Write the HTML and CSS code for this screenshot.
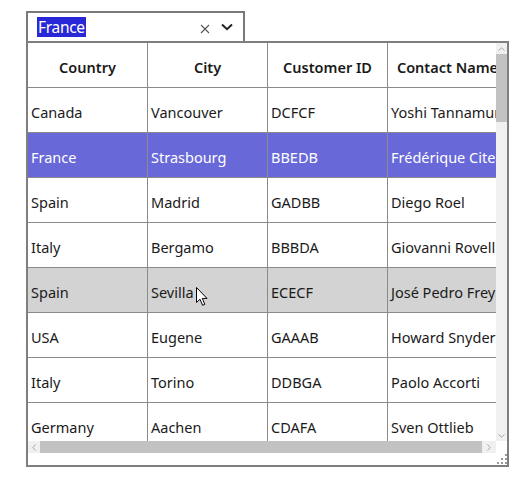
FILE: index.html
```html
<!DOCTYPE html>
<html>
<head>
<meta charset="utf-8">
<link rel="stylesheet" href="styles.css">
</head>
<body>
<div class="page">
  <div class="combo">
    <div class="combo-text"><span class="sel">France</span></div>
    <svg class="clear" width="10" height="10" viewBox="0 0 10 10"><path d="M1 1 L9 9 M9 1 L1 9" stroke="#555" stroke-width="1.1" fill="none"/></svg>
    <svg class="chev" width="12" height="8" viewBox="0 0 12 8"><path d="M1 1.5 L6 6.2 L11 1.5" stroke="#222" stroke-width="2" fill="none"/></svg>
  </div>
  <div class="popup">
    <div class="viewport">
      <div class="grid">
        <div class="row header"><div class="cell">Country</div><div class="cell">City</div><div class="cell">Customer ID</div><div class="cell">Contact Name</div></div>
        <div class="row"><div class="cell">Canada</div><div class="cell">Vancouver</div><div class="cell">DCFCF</div><div class="cell">Yoshi Tannamuri</div></div>
        <div class="row selected"><div class="cell">France</div><div class="cell">Strasbourg</div><div class="cell">BBEDB</div><div class="cell">Frédérique Citeaux</div></div>
        <div class="row"><div class="cell">Spain</div><div class="cell">Madrid</div><div class="cell">GADBB</div><div class="cell">Diego Roel</div></div>
        <div class="row"><div class="cell">Italy</div><div class="cell">Bergamo</div><div class="cell">BBBDA</div><div class="cell">Giovanni Rovelli</div></div>
        <div class="row hover"><div class="cell">Spain</div><div class="cell">Sevilla</div><div class="cell">ECECF</div><div class="cell">José Pedro Freyre</div></div>
        <div class="row"><div class="cell">USA</div><div class="cell">Eugene</div><div class="cell">GAAAB</div><div class="cell">Howard Snyder</div></div>
        <div class="row"><div class="cell">Italy</div><div class="cell">Torino</div><div class="cell">DDBGA</div><div class="cell">Paolo Accorti</div></div>
        <div class="row"><div class="cell">Germany</div><div class="cell">Aachen</div><div class="cell">CDAFA</div><div class="cell">Sven Ottlieb</div></div>
      </div>
      <div class="vscroll">
        <div class="arrow"><svg width="7" height="4" viewBox="0 0 7 4"><path d="M0.5 3.5 L3.5 0.8 L6.5 3.5" stroke="#a6a6a6" stroke-width="1" fill="none"/></svg></div>
        <div class="vthumb"></div>
        <div class="vtrack"></div>
        <div class="arrow"><svg width="7" height="4" viewBox="0 0 7 4"><path d="M0.5 0.5 L3.5 3.2 L6.5 0.5" stroke="#a6a6a6" stroke-width="1" fill="none"/></svg></div>
      </div>
    </div>
    <div class="hbar">
      <div class="hscroll">
        <div class="harrow"><svg width="4" height="7" viewBox="0 0 4 7"><path d="M3.5 0.5 L0.8 3.5 L3.5 6.5" stroke="#a6a6a6" stroke-width="1" fill="none"/></svg></div>
        <div class="hthumb"></div>
        <div class="harrow right"><svg width="4" height="7" viewBox="0 0 4 7"><path d="M0.5 0.5 L3.2 3.5 L0.5 6.5" stroke="#a6a6a6" stroke-width="1" fill="none"/></svg></div>
      </div>
      <div class="corner"></div>
    </div>
    <div class="footer">
      <svg class="grip" width="11" height="11" viewBox="0 0 11 11" fill="#9a9a9a">
        <rect x="8" y="0" width="2" height="2"/>
        <rect x="4" y="4" width="2" height="2"/><rect x="8" y="4" width="2" height="2"/>
        <rect x="0" y="8" width="2" height="2"/><rect x="4" y="8" width="2" height="2"/><rect x="8" y="8" width="2" height="2"/>
      </svg>
    </div>
  </div>
  <svg class="cursor" width="13" height="20" viewBox="0 0 13 20"><path d="M0.5 0.5 L0.5 15.5 L4 12.2 L6.6 18.3 L8.8 17.3 L6.3 11.4 L11 11.4 Z" fill="#fff" stroke="#000" stroke-width="1"/></svg>
</div>
</body>
</html>
```

FILE: styles.css
```css
* { box-sizing: border-box; }
html, body { margin: 0; padding: 0; background: #fff; }
body { font-family: "Noto Sans", "Open Sans", sans-serif; font-size: 14px; color: #1a1a1a; }
.page { position: relative; width: 529px; height: 482px; padding: 11px 0 0 26px; }

.combo {
  width: 219px; height: 30px;
  border: 2px solid #7a7a7a; border-bottom: none;
  display: flex; align-items: center;
  padding-left: 9px;
}
.combo-text { flex: 1; display: flex; margin-top: -1px; }
.sel { background: #2828d6; color: #fff; font-size: 15.5px; line-height: 20px; height: 20px; padding: 0 1px; display: inline-flex; align-items: center; letter-spacing: -0.3px; }
.clear { margin-right: 11px; margin-top: 4px; }
.chev { margin-right: 10px; margin-top: 0; }

.popup {
  width: 483px; height: 426px;
  border: 2px solid #7f7f7f;
  display: flex; flex-direction: column;
  background: #fff;
}
.viewport { display: flex; height: 398px; overflow: hidden; }
.grid { width: 468px; overflow: hidden; flex: none; }
.row { display: grid; grid-template-columns: 120px 120px 120px 120px; height: 45px; border-bottom: 1px solid #8a8a8a; width: 480px; }
.cell { border-right: 1px solid #8a8a8a; display: flex; align-items: center; padding: 4px 0 0 3px; white-space: nowrap; overflow: hidden; font-size: 14.5px; }
.header .cell { justify-content: center; font-weight: 600; padding-left: 0; }
.selected { background: #6868d9; }
.selected .cell { color: #fff; }
.hover { background: #d3d3d3; }

.vscroll { width: 11px; flex: none; background: #f0f0f0; display: flex; flex-direction: column; }
.arrow { height: 11px; display: flex; align-items: center; justify-content: center; }
.vthumb { height: 68px; background: #c2c2c2; }
.vtrack { flex: 1; }

.hbar { display: flex; height: 12px; }
.hscroll { width: 468px; background: #f0f0f0; display: flex; align-items: stretch; }
.harrow { width: 12px; display: flex; align-items: center; justify-content: center; }
.harrow.right { width: 14px; }
.hthumb { width: 442px; background: #c2c2c2; }
.corner { flex: 1; background: #fff; }

.footer { flex: 1; display: flex; justify-content: flex-end; align-items: flex-end; }
.grip { display: block; margin: 0 -1px 0 0; }

.cursor { position: absolute; left: 196px; top: 287px; }
```
